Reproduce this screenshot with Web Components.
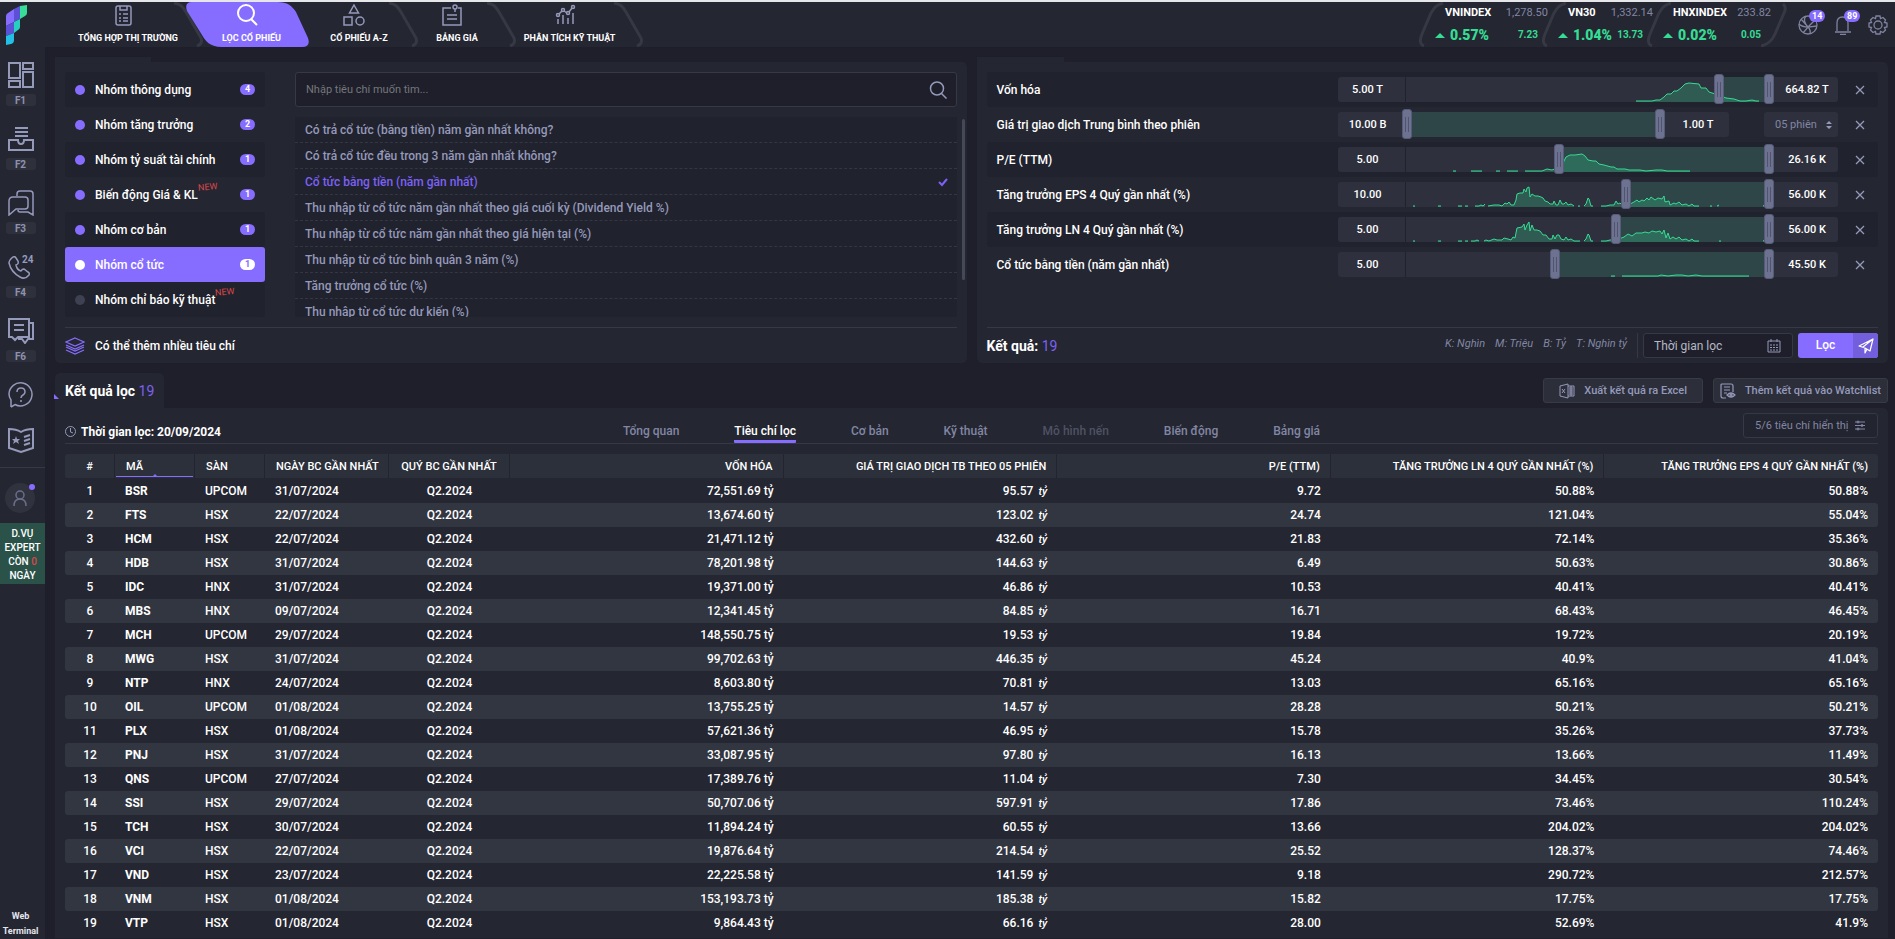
<!DOCTYPE html>
<html lang="vi">
<head>
<meta charset="utf-8">
<title>Lọc cổ phiếu</title>
<style>
  :root {
    --bg: #1e1f2a; --panel: #242631; --stripe: #20222d; --field: #2e313d; --line: #363945;
    --violet: #866dff; --green: #35dc94; --muted: #9599ba; --red: #d9484c;
  }
  html, body { margin: 0; height: 100%; }
  body { background: var(--bg); color: #fff; font: 500 12px/16px Roboto, "Noto Sans", sans-serif; overflow: hidden; }
</style>
</head>
<body>
<stock-app></stock-app>

<script>
const RESET = `*,*::before,*::after{box-sizing:border-box}
  button,input,select{font:inherit;color:inherit;margin:0;padding:0;border:0;background:none;border-radius:0;outline:0}
  a{color:inherit;text-decoration:none} ul{list-style:none;margin:0;padding:0} svg{display:block;fill:none;stroke:currentColor}`;

function define(name, css, markup) {
  const tpl = document.createElement('template');
  customElements.define(name, class extends HTMLElement {
    constructor() {
      super();
      this.attachShadow({ mode: 'open' });
    }
    connectedCallback() {
      if (this.shadowRoot.childNodes.length) return;
      tpl.innerHTML = `<style>${RESET}${css}</style>${typeof markup === 'function' ? markup(this) : markup}`;
      this.shadowRoot.append(tpl.content.cloneNode(true));
    }
  });
}

/* ---------- header ---------- */
define('nav-item', `
  :host{display:block;position:relative;width:var(--w);height:45px;color:var(--muted)}
  a{position:relative;display:flex;flex-direction:column;align-items:center;height:100%;padding-top:2px}
  .icon{height:22px;display:flex;align-items:center}
  .label{font:700 9px/16px Roboto,sans-serif;color:#fff;white-space:nowrap;padding-left:10px;margin-top:4px}
  .edge{position:absolute;right:-16px;top:0;width:30px;height:45px;color:#363844}
  .shape{display:none;position:absolute;left:-2px;top:0;width:124px;height:45px;fill:var(--violet);stroke:none}
  :host([active]){color:#fff} :host([active]) .shape{display:block} :host([active]) .edge{display:none}`,
  `<svg class="edge" viewBox="0 0 30 45" stroke-width="3"><path d="M0 1C7 2 9 5 12 10L27 36Q29 42 23 44"/></svg>
   <svg class="shape" viewBox="0 0 124 45"><path d="M6 0H91C102 0 106 4 110 10L122 36Q125 45 116 45H36C23 45 19 38 16 33L1 9Q-2 0 6 0"/></svg>
   <a href="#"><span class="icon"><slot name="icon"></slot></span><span class="label"><slot></slot></span></a>`);

define('market-index', `
  :host{display:block;position:relative;width:var(--w);height:45px}
  .row{display:flex;justify-content:space-between;align-items:center;white-space:nowrap}
  .top{padding-left:10px;font:700 11px/22px Roboto,sans-serif}
  .top span{font-weight:400;color:#8286a4;font-size:11px}
  .low{padding-right:10px;font:700 10px/22px Roboto,sans-serif;color:var(--green)}
  .low b{font-size:14px;display:flex;align-items:center;gap:5px}
  .low b::before{content:"";border:5px solid transparent;border-top:0;border-bottom:5px solid var(--green)}
  .edge,.end{position:absolute;top:0;left:-16px;width:26px;height:45px;color:#363844}
  .end{display:none;left:auto;right:-16px} :host([last]) .end{display:block}`,
  el => `<svg class="edge" viewBox="0 0 26 45" stroke-width="3"><path d="M24 1C17 3 15 6 12 11L3 32Q-1 42 5 44"/></svg>
   <svg class="end" viewBox="0 0 26 45" stroke-width="3"><path d="M22 2Q26 5 23 11L14 32C10 41 5 43 0 44"/></svg>
   <div class="row top"><slot></slot><span>${el.getAttribute('value')}</span></div>
   <div class="row low"><b>${el.getAttribute('percent')}</b><span>${el.getAttribute('change')}</span></div>`);

define('icon-badge', `
  :host{display:block;position:relative;width:20px;height:20px;color:#7f83a0}
  button{display:block;width:20px;height:20px;cursor:pointer}
  .n{position:absolute;left:11px;top:-5px;height:12px;padding:0 3px;border-radius:6px;background:var(--violet);color:#fff;font:700 9px/12px Roboto,sans-serif}`,
  el => `<button type="button" aria-label="${el.getAttribute('label')}"><slot></slot></button>${el.hasAttribute('count') ? `<span class="n">${el.getAttribute('count')}</span>` : ''}`);

define('app-header', `
  :host{display:flex;background:var(--panel);border-top:2px solid #e6e7ea;height:47px}
  .logo{width:58px;padding:3px 0 0 6px;display:block} .logo svg{stroke:none}
  nav{display:flex} .grow{flex:1}
  .market{display:flex;gap:10px;margin-right:27px}
  .tools{display:flex;gap:15px;padding:13px 7px 0 0}`,
  `<a class="logo" href="#" aria-label="Trang chủ"><svg width="22" height="41" viewBox="0 0 22 41">
     <path d="M0 11Q0 9 2 8L8 4V17L0 21Z" fill="#866dff"/><path d="M8 4L14 1V14L8 17Z" fill="#5b50d6"/><path d="M14 1L21 0V8Q21 10 19 11L14 14Z" fill="#37dc98"/>
     <path d="M0 21L8 17V28L0 31Z" fill="#5b50d6"/><path d="M8 17L14 14V22Q14 24 12 25L8 28Z" fill="#27cfc0"/><path d="M0 31L8 28V35Q8 38 5 39L0 40Z" fill="#22c0e4"/></svg></a>
   <nav>
    <nav-item style="--w:130px"><svg slot="icon" width="20" height="22" viewBox="0 0 20 22" stroke-width="1.500" fill="none" stroke="currentColor"><rect x="3" y="2" width="15" height="19" rx="2"/><path d="M7 2V6H14V2"/><path d="M6 10H8M10 10H15M6 14H8M10 14H15M6 17H8M10 17H15" stroke-width="1.500"/></svg>TỔNG HỢP THỊ TRƯỜNG</nav-item>
    <nav-item active style="--w:117px"><svg slot="icon" width="22" height="22" viewBox="0 0 22 22" stroke-width="2" fill="none" stroke="currentColor"><circle cx="10" cy="9" r="8"/><path d="M15 15L21 21"/></svg>LỌC CỔ PHIẾU</nav-item>
    <nav-item style="--w:98px"><svg slot="icon" width="22" height="22" viewBox="0 0 22 22" fill="none" stroke="currentColor" stroke-width="1.5"><path d="M11 1L15.500 9H6.500Z"/><rect x="1" y="13" width="8" height="8"/><circle cx="17" cy="17" r="4"/></svg>CỔ PHIẾU A-Z</nav-item>
    <nav-item style="--w:98px"><svg slot="icon" width="22" height="22" viewBox="0 0 22 22" fill="none" stroke="currentColor" stroke-width="1.5"><path d="M10 4H2V21H20V4H17"/><circle cx="14" cy="3" r="2"/><path d="M14 5V8M6 11H16M6 15H16"/></svg>BẢNG GIÁ</nav-item>
    <nav-item style="--w:127px"><svg slot="icon" width="22" height="22" viewBox="0 0 22 22" fill="none" stroke="currentColor" stroke-width="1.5"><path d="M4 20V15M9 20V11M14 20V14M19 20V9M5 10L8 7M10 7L13 9M15 8L18 4"/><circle cx="4" cy="11" r="1.500"/><circle cx="9" cy="6" r="1.500"/><circle cx="14" cy="9" r="1.500"/><circle cx="19" cy="3" r="1.500"/></svg>PHÂN TÍCH KỸ THUẬT</nav-item>
   </nav>
   <div class="grow"></div>
   <div class="market">
    <market-index style="--w:113px" value="1,278.50" percent="0.57%" change="7.23">VNINDEX</market-index>
    <market-index style="--w:95px" value="1,332.14" percent="1.04%" change="13.73">VN30</market-index>
    <market-index last style="--w:108px" value="233.82" percent="0.02%" change="0.05">HNXINDEX</market-index>
   </div>
   <div class="tools">
    <icon-badge label="Chia sẻ" count="14"><svg width="20" height="20" viewBox="0 0 20 20" fill="none" stroke="currentColor" stroke-width="1.300"><circle cx="10" cy="10" r="9"/><path d="M3 4L10 12L17 5M1 9Q4 12 10 12M5 18L10 12L19 11M10 12Q13 15 12 19M8 1Q4 5 10 12"/></svg></icon-badge>
    <icon-badge label="Thông báo" count="89"><svg width="20" height="20" viewBox="0 0 20 20" fill="none" stroke="currentColor" stroke-width="1.300"><path d="M2 17H18M4 16V8Q4 2 9.500 2T15 8V16M7 19.500H13"/></svg></icon-badge>
    <icon-badge label="Cài đặt"><svg width="20" height="20" viewBox="0 0 20 20" fill="none" stroke="currentColor" stroke-width="1.300"><circle cx="10" cy="10" r="4"/><path d="M8 1H12L12.500 3.500L15 2.500L17.500 5L16.500 7.500L19 8V12L16.500 12.500L17.500 15L15 17.500L12.500 16.500L12 19H8L7.500 16.500L5 17.500L2.500 15L3.500 12.500L1 12V8L3.500 7.500L2.500 5L5 2.500L7.500 3.500Z"/></svg></icon-badge>
   </div>`);

/* ---------- side rail ---------- */
define('rail-item', `
  :host{display:block;height:64px;color:var(--muted)}
  a{display:flex;flex-direction:column;align-items:center;gap:6px;width:41px}
  .key{width:30px;height:12px;border-radius:3px;background:#2e313c;text-align:center;font:700 10px/13px Roboto,sans-serif;color:#8e92b0}`,
  el => `<a href="#"><slot></slot>${el.hasAttribute('key') ? `<span class="key">${el.getAttribute('key')}</span>` : ''}</a>`);

const ic = (body, w = 1.5) => `<svg width="26" height="26" viewBox="0 0 26 26" fill="none" stroke="currentColor" stroke-width="${w}">${body}</svg>`;
define('side-rail', `
  :host{display:flex;flex-direction:column;background:var(--panel);padding-top:15px}
  rail-item.short{height:45px}
  hr{width:100%;border:0;border-top:1px solid var(--line);margin:-5px 0 15px}
  .user{position:relative;width:30px;height:30px;margin-left:5px;border-radius:50%;background:#30333e;display:grid;place-items:center;color:#6a6e8c;cursor:pointer;flex:none}
  .user::after{content:"";position:absolute;right:0;top:1px;width:6px;height:6px;border-radius:50%;background:var(--violet)}
  .plan{margin-top:10px;background:#2b5249;padding:4px 0 1px;text-align:center;font:500 10px/14px Roboto,sans-serif}
  .plan i{font-style:normal;color:var(--red)}
  .brand{margin:auto 4px 0 0;text-align:center;font:700 9px/15px Roboto,sans-serif;color:#e4e5ec}`,
  `<rail-item key="F1">${ic('<path d="M1 1H12V16H1ZM15 1H25V7H15ZM15 10H25V25H15ZM1 19H12V25H1Z"/>', 2)}</rail-item>
   <rail-item key="F2">${ic('<path d="M7 2H20M7 6H20M7 10H20M1 14H10Q10 18 13 18T16 14H25V24H1Z"/>', 2)}</rail-item>
   <rail-item key="F3">${ic('<path d="M9 6V4Q9 1 12 1H22Q25 1 25 4V25L20 22H12Q10 22 10 20M1 25V11Q1 7 5 7H17Q20 7 20 10V16Q20 19 17 19H8Z"/>')}</rail-item>
   <rail-item key="F4">${ic('<path d="M5 3Q1 6 1 9Q3 18 12 23Q17 26 21 21Q22 19 20 18L16 15Q14 15 13 17Q9 16 8 11Q11 10 10 7L8 4Q7 2 5 3Z"/><text x="14" y="9" font-family="Roboto" font-weight="700" font-size="10" stroke="none" fill="currentColor">24</text>')}</rail-item>
   <rail-item key="F6">${ic('<path d="M1 1H21V19H10L7 22L4 19H1ZM21 5H25V21H20L17 25L14 21H10M6 7H16M6 12H16"/>', 2)}</rail-item>
   <rail-item class="short">${ic('<path d="M3 25V18Q1 15 1 12A11.500 11.500 0 1 1 7 22.500L3 25"/><path d="M9 10Q9 6 13 6T17 10Q17 12 15 13Q13 14 13 16M13 18V20"/>')}</rail-item>
   <rail-item class="short">${ic('<path d="M1 2Q8 2 13 5Q18 2 25 2V21L13 25L1 21Z"/><path d="M16 10L22 8M16 14L22 12M16 18L22 16"/><path d="M8 9L9 12H12L10 14L11 17L8 15L5 17L6 14L4 12H7Z" fill="currentColor" stroke="none"/>', 2)}</rail-item>
   <hr>
   <button class="user" type="button" aria-label="Tài khoản"><svg width="16" height="16" viewBox="0 0 16 16" stroke-width="1.500"><circle cx="8" cy="5" r="4"/><path d="M2 16Q2 9 8 9T14 16"/></svg></button>
   <div class="plan">D.VỤ<br>EXPERT<br>CÒN <i>0</i><br>NGÀY</div>
   <div class="brand">Web<br>Terminal</div>`);

/* ---------- criteria panel ---------- */
define('group-item', `
  :host{display:block}
  button{display:flex;align-items:center;width:100%;height:35px;padding:0 10px;border-radius:3px;text-align:left;cursor:pointer}
  :host(:nth-child(odd)) button{background:var(--stripe)}
  i{width:10px;height:10px;border-radius:50%;background:var(--violet);margin-right:10px}
  .name{flex:1} sup{font-size:9px;font-weight:400;line-height:0;color:var(--red);display:inline-block;transform:rotate(-5deg);vertical-align:9px}
  .n{width:15px;height:11px;border-radius:6px;background:var(--violet);text-align:center;font:700 9px/11px Roboto,sans-serif}
  :host([off]) i{background:#3e4152}
  :host([active]) button{background:var(--violet)} :host([active]) i{background:#fff} :host([active]) .n{background:#fff;color:var(--violet)}`,
  el => `<button type="button"><i></i><span class="name"><slot></slot>${el.hasAttribute('new') ? '<sup>NEW</sup>' : ''}</span>${el.hasAttribute('count') ? `<span class="n">${el.getAttribute('count')}</span>` : ''}</button>`);

const PANEL = `:host{display:flex;flex-direction:column;position:relative;background:var(--panel);border-radius:5px;height:301px;padding:10px 10px 0}
  :host::before{content:"";position:absolute;left:0;top:-5px;width:var(--nub,96px);height:10px;background:var(--panel)}`;

define('criteria-panel', PANEL + `
  .body{display:flex;gap:30px;height:245px}
  .groups{width:200px}
  .right{flex:1;min-width:0;display:flex;flex-direction:column;gap:10px;position:relative}
  .search{display:flex;align-items:center;height:35px;border:1px solid #363945;border-radius:3px;background:var(--bg);padding:0 9px 0 10px}
  .search input{flex:1;font-weight:400;font-size:11px} .search input::placeholder{color:#75777c;opacity:1}
  .search button{color:var(--muted)}
  .list{height:200px;overflow:hidden;background:var(--stripe)}
  .list button{display:flex;justify-content:space-between;align-items:center;width:100%;height:26px;padding:0 9px 0 10px;border-bottom:1px dashed #343743;color:var(--muted);text-align:left}
  .list .on{color:#7c61f5} .list .on svg{stroke-width:2}
  .bar{position:absolute;right:-8px;top:47px;width:3px;height:161px;border-radius:2px;background:#454858}
  .foot{display:flex;align-items:center;gap:10px;border-top:1px solid var(--line);margin-top:10px;flex:1} .foot svg{color:var(--violet)}`,
  `<div class="body"><div class="groups">
     <group-item count="4">Nhóm thông dụng</group-item><group-item count="2">Nhóm tăng trưởng</group-item>
     <group-item count="1">Nhóm tỷ suất tài chính</group-item><group-item count="1" new>Biến động Giá &amp; KL</group-item>
     <group-item count="1">Nhóm cơ bản</group-item><group-item count="1" active>Nhóm cổ tức</group-item>
     <group-item off new>Nhóm chỉ báo kỹ thuật</group-item></div>
   <div class="right">
     <div class="search"><input type="text" aria-label="Tìm tiêu chí" placeholder="Nhập tiêu chí muốn tìm..."><button type="button" aria-label="Tìm"><svg width="18" height="18" viewBox="0 0 18 18" stroke-width="1.500"><circle cx="8" cy="7.500" r="6.500"/><path d="M12.500 12.500L17.500 17.500"/></svg></button></div>
     <ul class="list">
      <li><button type="button">Có trả cổ tức (bằng tiền) năm gần nhất không?</button></li>
      <li><button type="button">Có trả cổ tức đều trong 3 năm gần nhất không?</button></li>
      <li><button type="button" class="on">Cổ tức bằng tiền (năm gần nhất)<svg width="10" height="10" viewBox="0 0 10 10"><path d="M1 5L4 8L9 2"/></svg></button></li>
      <li><button type="button">Thu nhập từ cổ tức năm gần nhất theo giá cuối kỳ (Dividend Yield %)</button></li>
      <li><button type="button">Thu nhập từ cổ tức năm gần nhất theo giá hiện tại (%)</button></li>
      <li><button type="button">Thu nhập từ cổ tức bình quân 3 năm (%)</button></li>
      <li><button type="button">Tăng trưởng cổ tức (%)</button></li>
      <li><button type="button">Thu nhập từ cổ tức dự kiến (%)</button></li>
     </ul><div class="bar"></div>
   </div></div>
   <div class="foot"><svg width="20" height="18" viewBox="0 0 20 18" stroke-width="1.200"><path d="M10 1L19 5L10 9L1 5ZM1 8L10 12L19 8M1 10L10 14L19 10M1 13L10 17L19 13"/></svg>Có thể thêm nhiều tiêu chí</div>`);

/* ---------- range filters ---------- */
const CHARTS = {
  cap: '230,24 246,24 250,23 254,23 258,20 261,17 265,17 268,14 271,14 275,11 279,7 283,6 293,7 295,11 300,11 303,15 306,16 310,17 315,19 320,21 328,22 334,24 340,24 346,23 350,24 353,24',
  pe: '47,24 50,24|65,24 76,24|90,24 94,24|101,24 112,24|119,24 131,24 136,24 141,22 146,23 151,21 156,18 160,10 164,8 169,8 176,7 179,9 182,13 187,14 190,14 193,17 198,18 205,20 208,20 211,22 219,22 223,23 234,23 240,24 250,23 256,23 261,24 284,24',
  eps: '7,24 9,24|32,24 35,24|52,24 56,24|59,24 62,24|69,24 73,24 75,23 77,24 79,22|82,24 88,23 93,23 96,24 99,21 101,22 103,20 105,23 108,23 110,18 111,12 114,11 117,11 118,7 120,10 121,6 123,5 124,15 126,12 129,14 132,14 135,15 137,16 139,19 142,20 144,22 147,22 148,19 150,23 152,23 154,18 156,22 158,22 160,20 162,23 165,22 168,24|172,24 174,24|178,24 180,22 182,16 183,17 185,24 187,24|195,24 200,24 204,23 208,23 210,19 212,22 214,21 216,23 219,20 224,22 228,20 231,18 233,20 236,18 238,19 241,16 243,18 245,15 249,18 252,16 256,17 258,14 259,20 263,19 264,23 268,21 270,22 273,20 276,23 280,22 283,24 286,22 288,24 293,24|304,24 306,24|311,24 313,23|357,24 359,23',
  ln: '7,24 9,24|32,24 35,24|52,24 56,24|59,24 62,24|65,24 69,24 71,23 73,24|78,24 80,23 83,24 88,22 91,23 96,23 98,21 102,22 105,23 107,20 109,21 111,11 116,10 118,7 119,13 121,8 123,5 124,14 126,8 128,13 131,13 134,14 137,18 140,18 143,22 146,22 147,18 149,22 151,18 153,18 155,22 158,23 160,20 162,23 165,22 168,24 174,24|178,24 180,22 182,17 183,18 185,24 187,24|195,24 200,24 204,23 208,23 213,22 218,20 222,17 226,19 230,16 236,16 239,15 243,16 246,14 250,15 254,14 256,17 258,13 260,21 262,16 264,22 267,20 270,22 273,20 276,23 280,22 283,24 286,22 288,24 293,24|313,24 315,24|357,24 359,23',
  div: '205,24 209,24|216,24 252,24 255,23 262,24 270,23 276,23 282,24 290,23 296,24 343,24'
};
function chart(name) {
  if (!CHARTS[name]) return '';
  return CHARTS[name].split('|').map(p => {
    const pts = p.split(' '), x0 = pts[0].split(',')[0], x1 = pts[pts.length - 1].split(',')[0];
    return `<polygon points="${x0},25 ${p} ${x1},25" fill="#35dc94" fill-opacity="0.250" stroke="none"/><polyline points="${p}" fill="none" stroke="#35dc94" stroke-width="1"/>`;
  }).join('');
}

define('filter-row', `
  :host{display:flex;align-items:center;height:35px;padding:0 13px 0 10px;border-radius:3px}
  :host(:nth-child(odd)){background:var(--stripe)}
  .name{flex:1} .box{display:flex;width:500px;justify-content:space-between}
  .range{display:flex;height:25px;width:500px} .range.short{width:391px}
  .range input[type=text]{width:69px;background:var(--field);text-align:center;border-radius:0 3px 3px 0;font-size:11px;padding-left:7px}
  .range input.min{width:67px;border-radius:3px 0 0 3px;padding:0 8px 0 0}
  .track{position:relative;flex:1;background:var(--field);border-left:1px solid #20222c}
  .sel{position:absolute;top:0;bottom:0;left:calc(var(--from)*1%);right:0;background:rgba(53,220,148,.12)}
  .track svg{position:absolute;inset:0;width:100%;height:100%}
  .track input{appearance:none;position:absolute;left:-4px;top:-3px;width:calc(100% + 9px);height:30px;pointer-events:none}
  .track input::-webkit-slider-thumb{appearance:none;pointer-events:auto;width:10px;height:30px;border-radius:3px;border:1px solid #565b78;
    background:linear-gradient(#50546f,#50546f) 2px 50%/1px 15px no-repeat,linear-gradient(#50546f,#50546f) 5px 50%/1px 15px no-repeat,#6d7291}
  select{appearance:none;width:74px;height:25px;border-radius:3px;padding:0 11px;font-weight:400;font-size:11px;color:#8286a4;background:var(--field)}
  .sw{position:relative} .sw svg{position:absolute;right:6px;top:9px;fill:var(--muted);stroke:none;pointer-events:none}
  .x{margin-left:17px;width:10px;height:10px;color:var(--muted)}`,
  el => {
    const g = n => el.getAttribute(n), label = el.textContent, short = el.hasAttribute('sessions');
    return `<span class="name"><slot></slot></span><div class="box"><div class="range ${short ? 'short' : ''}" style="--from:${g('from')}">
    <input class="min" type="text" aria-label="${label} từ" value="${g('min')}">
    <div class="track"><div class="sel"></div><svg viewBox="0 0 363 25" preserveAspectRatio="none">${chart(g('chart'))}</svg>
      <input type="range" aria-label="${label} tối thiểu" min="0" max="100" step="any" value="${g('from')}"><input type="range" aria-label="${label} tối đa" min="0" max="100" value="100"></div>
    <input type="text" aria-label="${label} đến" value="${g('max')}"></div>
    ${short ? '<div class="sw"><select aria-label="Số phiên"><option>05 phiên</option></select><svg width="6" height="8" viewBox="0 0 6 8"><path d="M3 0L6 3H0ZM3 8L6 5H0Z"/></svg></div>' : ''}</div>
    <button class="x" type="button" aria-label="Xóa ${label}"><svg width="10" height="10" viewBox="0 0 10 10" stroke-width="1.300"><path d="M1 1L9 9M9 1L1 9"/></svg></button>`;
  });

define('filter-panel', PANEL + `
  .rows{height:245px}
  .foot{display:flex;align-items:center;border-top:1px solid var(--line);margin-top:10px;flex:1}
  .count{font:700 14px/24px Roboto,sans-serif;flex:1} .count b{color:#7c61f5;font-weight:400}
  .units{display:flex;gap:10px;color:#8286a4;font-weight:400;font-size:11px;font-style:italic;padding-right:10px;height:25px;border-right:1px solid var(--line);line-height:22px}
  .date{display:flex;align-items:center;width:150px;height:25px;margin:0 5px 0 5px;border:1px solid #363945;border-radius:3px;background:var(--bg);padding:0 11px 0 10px;color:var(--muted)}
  .date input{flex:1;width:100px;font-weight:400} .date input::placeholder{color:#b6b8c4;opacity:1}
  .go{display:flex;width:80px;height:25px;border-radius:3px;overflow:hidden;background:var(--violet);font-size:12px;line-height:25px}
  .go span{flex:1;text-align:center} .go i{width:25px;background:#735edb;display:grid;place-items:center;align-self:stretch}`,
  `<div class="rows">
    <filter-row chart="cap" min="5.00 T" max="664.82 T" from="86.2">Vốn hóa</filter-row>
    <filter-row sessions min="10.00 B" max="1.00 T" from="0">Giá trị giao dịch Trung bình theo phiên</filter-row>
    <filter-row chart="pe" min="5.00" max="26.16 K" from="42">P/E (TTM)</filter-row>
    <filter-row chart="eps" min="10.00" max="56.00 K" from="60.6">Tăng trưởng EPS 4 Quý gần nhất (%)</filter-row>
    <filter-row chart="ln" min="5.00" max="56.00 K" from="57.7">Tăng trưởng LN 4 Quý gần nhất (%)</filter-row>
    <filter-row chart="div" min="5.00" max="45.50 K" from="41">Cổ tức bằng tiền (năm gần nhất)</filter-row></div>
   <div class="foot"><div class="count">Kết quả: <b>19</b></div>
    <div class="units"><span>K: Nghìn</span><span>M: Triệu</span><span>B: Tỷ</span><span>T: Nghìn tỷ</span></div>
    <div class="date"><input type="text" aria-label="Thời gian lọc" placeholder="Thời gian lọc"><svg width="14" height="14" viewBox="0 0 14 14"><path d="M1 2H13V13H1ZM4 0V3M10 0V3"/><path d="M3 6H11M3 8.500H11M3 11H11" stroke-dasharray="2 1"/></svg></div>
    <button class="go" type="button"><span>Lọc</span><i><svg width="16" height="16" viewBox="0 0 16 16" stroke-width="1.200" stroke-linejoin="round"><path d="M1 8L15 1L12 13L7 10ZM7 10V15L9 11M15 1L5 9"/></svg></i></button></div>`);

/* ---------- results ---------- */
const ROWS = `BSR UPCOM 31/07/2024 72,551.69 95.57 9.72 50.88% 50.88%
FTS HSX 22/07/2024 13,674.60 123.02 24.74 121.04% 55.04%
HCM HSX 22/07/2024 21,471.12 432.60 21.83 72.14% 35.36%
HDB HSX 31/07/2024 78,201.98 144.63 6.49 50.63% 30.86%
IDC HNX 31/07/2024 19,371.00 46.86 10.53 40.41% 40.41%
MBS HNX 09/07/2024 12,341.45 84.85 16.71 68.43% 46.45%
MCH UPCOM 29/07/2024 148,550.75 19.53 19.84 19.72% 20.19%
MWG HSX 31/07/2024 99,702.63 446.35 45.24 40.9% 41.04%
NTP HNX 24/07/2024 8,603.80 70.81 13.03 65.16% 65.16%
OIL UPCOM 01/08/2024 13,755.25 14.57 28.28 50.21% 50.21%
PLX HSX 01/08/2024 57,621.36 46.95 15.78 35.26% 37.73%
PNJ HSX 31/07/2024 33,087.95 97.80 16.13 13.66% 11.49%
QNS UPCOM 27/07/2024 17,389.76 11.04 7.30 34.45% 30.54%
SSI HSX 29/07/2024 50,707.06 597.91 17.86 73.46% 110.24%
TCH HSX 30/07/2024 11,894.24 60.55 13.66 204.02% 204.02%
VCI HSX 22/07/2024 19,876.64 214.54 25.52 128.37% 74.46%
VND HSX 23/07/2024 22,225.58 141.59 9.18 290.72% 212.57%
VNM HSX 01/08/2024 153,193.73 185.38 15.82 17.75% 17.75%
VTP HSX 01/08/2024 9,864.43 66.16 28.00 52.69% 41.9%`.split('\n').map(r => r.split(' '));

define('result-table', `
  :host{display:block}
  table{width:100%;border-collapse:separate;border-spacing:0;table-layout:fixed}
  th,td{padding:0 10px;white-space:nowrap;font-weight:500;font-size:12px;line-height:24px;height:24px;text-align:right}
  th{background:#2c303b;border-right:1px solid #22242e;font-size:11px;line-height:23px;height:25px;border-bottom:1px solid var(--panel);position:relative}
  th:last-child,td:last-child{border-right:0;border-radius:0 3px 3px 0} th:first-child,td:first-child{border-radius:3px 0 0 3px}
  th:first-child,td:first-child,.q{text-align:center} .l{text-align:left}
  th.l{padding-left:11px}
  tbody tr:nth-child(even) td{background:#323641}
  .sort::after{content:"";position:absolute;left:1px;right:1px;bottom:1px;height:1px;background:var(--violet)}
  .sort::before{content:"";position:absolute;left:37px;bottom:1px;border:3px solid transparent;border-top:0;border-bottom:3px solid var(--violet)}
  .code{font-weight:700} small{font-size:11px;line-height:0;font-style:italic;margin-left:2px}`,
  `<table><colgroup><col style="width:50px"><col style="width:80px"><col style="width:70px"><col style="width:124px"><col style="width:121px"><col span="5"></colgroup>
   <thead><tr><th>#</th><th class="l sort">MÃ</th><th class="l">SÀN</th><th class="l">NGÀY BC GẦN NHẤT</th><th class="q">QUÝ BC GẦN NHẤT</th><th>VỐN HÓA</th><th>GIÁ TRỊ GIAO DỊCH TB THEO 05 PHIÊN</th><th>P/E (TTM)</th><th>TĂNG TRƯỞNG LN 4 QUÝ GẦN NHẤT (%)</th><th>TĂNG TRƯỞNG EPS 4 QUÝ GẦN NHẤT (%)</th></tr></thead>
   <tbody>${ROWS.map((r, i) => `<tr><td>${i + 1}</td><td class="l code">${r[0]}</td><td class="l">${r[1]}</td><td class="l">${r[2]}</td><td class="q">Q2.2024</td><td>${r[3]} tỷ</td><td>${r[4]} <small>tỷ</small></td><td>${r[5]}</td><td>${r[6]}</td><td>${r[7]}</td></tr>`).join('')}</tbody></table>`);

define('results-panel', `
  :host{display:flex;flex-direction:column;min-height:0}
  .head{display:flex;height:35px;align-items:center;gap:10px}
  h2{margin:0;align-self:stretch;position:relative;background:var(--panel);border-radius:5px 5px 0 0;padding:0 10px;font:700 14px/36px Roboto,sans-serif;white-space:nowrap;margin-right:auto}
  h2 b{color:#7c61f5;font-weight:400}
  h2::before{content:"";position:absolute;left:-1px;bottom:9px;border-bottom:5px solid var(--violet);border-right:5px solid transparent}
  .act{display:flex;align-items:center;height:25px;border:1px solid #393b42;border-radius:3px;background:#2c2f3a;color:var(--muted);font-size:11px;white-space:nowrap;justify-content:space-between}
  .excel{width:160px;padding:0 15px} .watch{width:175px;padding:0 6px}
  .body{background:var(--panel);border-radius:0 5px 0 0;padding:0 10px;flex:1}
  .bar{display:grid;grid-template-columns:1fr auto 1fr;align-items:center;height:36px;border-bottom:1px solid var(--line);margin-bottom:10px}
  .time{display:flex;align-items:center;gap:5px;font-weight:700;padding-top:12px} .time svg{color:var(--muted)}
  nav{display:flex;gap:55px;align-self:end;color:#8286a4} nav a{display:block;height:23px;line-height:22px;white-space:nowrap}
  nav .on{color:#fff;border-bottom:3px solid var(--violet);border-radius:1px} nav .dim{color:#4f5264}
  .show{justify-self:end;align-self:start;margin-top:5px;display:flex;align-items:center;padding:0 0 0 11px;gap:6px;width:135px;height:25px;border:1px solid #363945;border-radius:3px;background:#22242f;color:#8286a4;font-weight:400;font-size:11px}`,
  `<div class="head"><h2>Kết quả lọc <b>19</b></h2>
    <button class="act excel" type="button"><svg width="16" height="16" viewBox="0 0 16 16"><path d="M1 3L9 1V15L1 13ZM9 3H15V13H9M10 5H14M10 7H14M10 9H14M10 11H14M12 3V13M3 6L6 10M6 6L3 10"/></svg>Xuất kết quả ra Excel</button>
    <button class="act watch" type="button"><svg width="16" height="16" viewBox="0 0 16 16" stroke-width="1.200"><path d="M6 15H3Q1 15 1 13V2Q1 1 2 1H11Q13 1 13 3V9M4 4H10M4 7H10M4 10H7M7 12Q11 8 15 12Q11 16 7 12Z"/><circle cx="11" cy="12" r="1"/></svg>Thêm kết quả vào Watchlist</button></div>
   <div class="body"><div class="bar"><div class="time"><svg width="11" height="11" viewBox="0 0 11 11"><circle cx="5.500" cy="5.500" r="5"/><path d="M5.500 2V6L8 7"/></svg>Thời gian lọc: 20/09/2024</div>
    <nav><a href="#">Tổng quan</a><a href="#" class="on">Tiêu chí lọc</a><a href="#">Cơ bản</a><a href="#">Kỹ thuật</a><a href="#" class="dim">Mô hình nến</a><a href="#">Biến động</a><a href="#">Bảng giá</a></nav>
    <button class="show" type="button">5/6 tiêu chí hiển thị<svg width="10" height="11" viewBox="0 0 10 11"><path d="M0 2H10M0 5.500H10M0 9H10"/><circle cx="3" cy="2" r="1"/><circle cx="7" cy="5.500" r="1"/><circle cx="3" cy="9" r="1"/></svg></button></div>
    <result-table></result-table></div>`);

define('stock-app', `
  :host{display:grid;grid-template:auto 1fr / 45px 1fr;height:100vh}
  app-header{grid-column:1 / -1}
  main{display:flex;flex-direction:column;gap:10px;padding:15px 7px 1px 10px;min-width:0;min-height:0}
  .top{display:grid;grid-template-columns:1fr 1fr;gap:10px;flex:none} filter-panel{--nub:87px} results-panel{flex:1}`,
  `<app-header></app-header><side-rail></side-rail>
   <main><div class="top"><criteria-panel></criteria-panel><filter-panel></filter-panel></div><results-panel></results-panel></main>`);
</script>
</body>
</html>
